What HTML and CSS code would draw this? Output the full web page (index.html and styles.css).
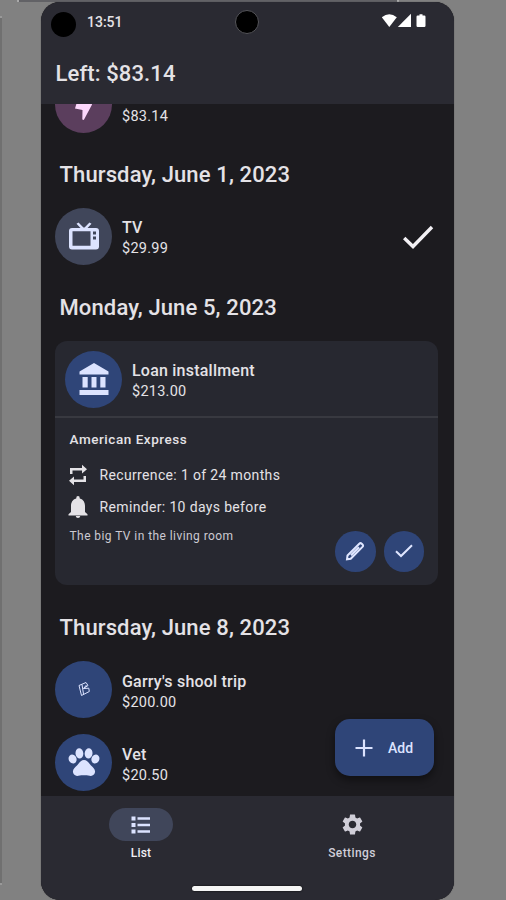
FILE: index.html
```html
<!DOCTYPE html>
<html lang="en">
<head>
<meta charset="utf-8">
<title>Payments</title>
<link rel="stylesheet" href="styles.css">
</head>
<body>
<div class="edge edge-left"></div>
<div class="edge edge-top"></div>
<main class="phone">
  <header class="top">
    <div class="status">
      <span class="dot"></span>
      <span class="clock">13:51</span>
      <span class="camera"></span>
      <svg class="signals" viewBox="0 0 48 16" width="48" height="16">
        <path d="M.8 4.2Q8.300-1.500 15.800 4.200L8.300 14Z"/>
        <path d="M30 .800V14H16.800Z"/>
        <path d="M38.500 1.300h3v1.200h1.800q1.200 0 1.200 1.200v9q0 1.300-1.200 1.300h-6.600q-1.200 0-1.200-1.300v-9q0-1.200 1.200-1.200h1.800Z"/>
      </svg>
    </div>
    <h1 class="balance">Left: $83.14</h1>
  </header>

  <section class="list">
    <div class="row row-first">
      <span class="avatar plum"><svg viewBox="0 0 34 34" width="34" height="34"><path d="M9.500 16.500 27 8 24.800 18 16.800 33 15.300 32.500 15.500 23 8 21.500Z"/></svg></span>
      <div class="info info-first"><span class="sum">$83.14</span></div>
    </div>
    <h2 class="date date-first">Thursday, June 1, 2023</h2>
    <div class="row">
      <span class="avatar slate"><svg viewBox="0 0 32 30" width="32" height="30"><path d="m8.500 1.800 2-1.300 5 5h1L21.500.500l2 1.300-4 4.200H28q3 0 3 3V24.500q0 3-3 3H4q-3 0-3-3V9q0-3 3-3h8.500ZM4.500 9.300v14.500h18V9.300ZM25 9.500v3h3v-3Zm0 5v3h3v-3Z" fill-rule="evenodd"/></svg></span>
      <div class="info"><b class="name">TV</b><span class="sum">$29.99</span></div>
      <svg class="done" viewBox="0 0 32 24" width="32" height="24"><path d="m2.200 13 8.800 8.500L30 2"/></svg>
    </div>
    <h2 class="date">Monday, June 5, 2023</h2>
    <article class="card">
      <div class="row card-head">
        <span class="avatar blue"><svg viewBox="0 0 30 32" width="30" height="32"><path d="M15 0 29.500 8.500v3H.500v-3ZM3.500 14H8.700v10.500H3.500Zm9 0h5v10.500h-5Zm8.800 0h5.200v10.500h-5.200ZM.500 27h29v5H.500Z"/></svg></span>
        <div class="info"><b class="name">Loan installment</b><span class="sum">$213.00</span></div>
      </div>
      <div class="details">
        <p class="account">American Express</p>
        <p class="fact"><svg viewBox="0 0 20 22" width="20" height="22"><path d="M2 10V4h12V.800l5 4.400-5 4.400V6.500H4.500V10ZM18 12v6H6v3.200l-5-4.400 5-4.400v3.100h9.500V12Z"/></svg><span>Recurrence: 1 of 24 months</span></p>
        <p class="fact"><svg viewBox="0 0 20 22" width="20" height="22"><path d="M10 0q1.800 0 1.800 2.400C15.500 3.300 17 6.500 17 10v6l2.500 2.300v1.200H.500v-1.200L3 16v-6c0-3.500 1.500-6.700 5.200-7.600Q8.200 0 10 0ZM7.700 20h4.600Q12 22 10 22T7.700 20Z"/></svg><span>Reminder: 10 days before</span></p>
        <p class="note">The big TV in the living room</p>
        <div class="actions">
          <span class="action"><svg viewBox="0 0 22 22" width="22" height="22" class="line"><path d="m3 19.300.500-3.800L15.300 3.700q1.200-1.200 2.400 0l.800.800q1.200 1.200 0 2.400L6.700 18.700ZM7 15.200 15 7.200"/></svg></span>
          <span class="action"><svg viewBox="0 0 20 16" width="20" height="16" class="line"><path d="m2 8.300 5 4.700L18 2.200"/></svg></span>
        </div>
      </div>
    </article>
    <h2 class="date">Thursday, June 8, 2023</h2>
    <div class="row row-low">
      <span class="avatar blue"><svg class="scribble" viewBox="0 0 16 18" width="16" height="18"><path d="M3 5.500 10 2.500 12 5.500 7.500 8.500 12.800 8.200 13.300 11.500 5.500 15.500ZM6 4.500 7.500 14M7.500 8.500 10.500 5"/></svg></span>
      <div class="info"><b class="name">Garry's shool trip</b><span class="sum">$200.00</span></div>
    </div>
    <div class="row row-low row-next">
      <span class="avatar blue"><svg viewBox="0 0 32 28" width="32" height="28"><ellipse cx="4.600" cy="11" rx="3.900" ry="4.700" transform="rotate(-22 4.600 11)"/><ellipse cx="11.400" cy="5.400" rx="3.900" ry="5.200" transform="rotate(-6 11.400 5.400)"/><ellipse cx="20.600" cy="5.400" rx="3.900" ry="5.200" transform="rotate(6 20.600 5.400)"/><ellipse cx="27.400" cy="11" rx="3.900" ry="4.700" transform="rotate(22 27.400 11)"/><path d="M16 12c3 0 5 3.200 7 5.400 2 2 4.500 3.800 4 6.800-.5 3-3.500 4-5.500 3.600-3.500-.6-7.500-.6-11 0-2 .4-5-.6-5.500-3.600-.5-3 2-4.800 4-6.800 2-2.200 4-5.400 7-5.400Z"/></svg></span>
      <div class="info"><b class="name">Vet</b><span class="sum">$20.50</span></div>
    </div>
    <button class="add"><svg viewBox="0 0 18 18" width="18" height="18"><path d="M7.900.500h2.200v7.400h7.400v2.200h-7.400v7.400H7.900v-7.400H.500V7.900h7.400Z"/></svg><span>Add</span></button>
  </section>

  <nav class="tabs">
    <a class="tab active"><span class="pill"><svg viewBox="0 0 20 18" width="20" height="18"><path d="M.500.500h4v4h-4Zm0 6.500h4v4h-4Zm0 6.500h4v4h-4ZM6.500 1.200H19v2.600H6.500Zm0 6.500H19v2.600H6.500Zm0 6.500H19v2.600H6.500Z"/></svg></span><span>List</span></a>
    <a class="tab"><span class="pill"><svg viewBox="2 2 20 20" width="21" height="21"><path d="M19.140 12.940c.04-.3.060-.61.060-.94 0-.32-.02-.64-.07-.94l2.030-1.580a.49.490 0 0 0 .12-.61l-1.920-3.320a.488.488 0 0 0-.59-.22l-2.390.960c-.5-.38-1.030-.7-1.620-.94l-.36-2.540a.484.484 0 0 0-.48-.41h-3.840c-.24 0-.43.170-.47.410l-.36 2.540c-.59.240-1.130.570-1.620.940l-2.390-.96c-.22-.08-.47 0-.59.220L2.740 8.870c-.12.210-.08.470.12.610l2.030 1.580c-.05.300-.09.630-.09.940s.02.640.070.940l-2.030 1.580a.49.490 0 0 0-.12.610l1.920 3.320c.12.220.370.290.590.220l2.390-.96c.5.380 1.030.700 1.620.940l.36 2.540c.05.240.240.410.480.410h3.840c.24 0 .44-.17.470-.41l.36-2.540c.59-.24 1.130-.56 1.620-.94l2.390.960c.22.080.470 0 .59-.22l1.920-3.320c.12-.22.070-.47-.12-.61l-2.010-1.580zM12 15.600c-1.980 0-3.600-1.620-3.600-3.600s1.620-3.600 3.600-3.600 3.600 1.620 3.600 3.600-1.620 3.600-3.600 3.600z"/></svg></span><span>Settings</span></a>
    <span class="home"></span>
  </nav>
</main>
</body>
</html>
```
FILE: styles.css
```css
* { box-sizing: border-box; margin: 0; padding: 0; }
body {
  width: 506px;
  height: 900px;
  overflow: hidden;
  position: relative;
  padding: 2px 0 0 41px;
  background: #818181;
  font-family: Roboto, "Liberation Sans", sans-serif;
  color: #e4e2e6;
}
svg { display: block; flex: none; fill: currentColor; }
.edge { position: absolute; }
.edge-left { left: 0; top: 16px; width: 2px; height: 869px; background: #707070; border-top: 2px solid #999; border-bottom: 2px solid #999; }
.edge-top { left: 17px; top: 0; width: 382px; height: 2px; background: #626266; border-left: 2px solid #aaa; border-right: 2px solid #aaa; }

.phone {
  position: relative;
  display: flex;
  flex-direction: column;
  width: 413px;
  height: 898px;
  overflow: hidden;
  border-radius: 19px;
  background: #1c1b1f;
  box-shadow: 0 0 1px #333;
}
.top { height: 102px; background: #2a2a32; flex: none; }
.status { display: flex; align-items: center; height: 40px; position: relative; }
.dot { width: 25px; height: 25px; margin: 5px 11px 0 10px; border-radius: 50%; background: #000; }
.clock { font-size: 14px; font-weight: 500; }
.camera { position: absolute; left: 194px; top: 8px; width: 24px; height: 24px; border-radius: 50%; background: #000; border: 1px solid #55555a; }
.signals { margin: -2px 25px 0 auto; color: #fff; }
.balance { margin: 18px 0 0 14.500px; font-size: 22px; line-height: 28px; font-weight: 500; letter-spacing: .12px; }

.list { position: relative; flex: 1; min-height: 0; overflow: hidden; padding: 0 16px 0 14px; }
.row { display: flex; align-items: center; height: 57px; }
.row-first { margin-top: -28.500px; }
.row-next { margin-top: 16px; }
.avatar { display: flex; align-items: center; justify-content: center; width: 57px; height: 57px; border-radius: 50%; flex: none; color: #dce3ff; }
.plum { background: #5b3e5d; color: #fbd7fb; }
.slate { background: #40465a; }
.blue { background: #2f4578; }
.info { display: flex; flex-direction: column; margin-left: 10px; padding-top: 4px; }
.info-first { padding-top: 24px; }
.row-low .info { padding-top: 6px; }
.name { font-size: 16px; line-height: 20px; font-weight: 500; letter-spacing: .22px; }
.sum { font-size: 14.500px; line-height: 21px; letter-spacing: .25px; }
.done { margin: 0 4px 0 auto; fill: none; stroke: #f2f0f4; stroke-width: 3.400; }
.date { height: 75.500px; padding: 28px 0 0 4.500px; font-size: 22px; line-height: 29px; font-weight: 500; white-space: nowrap; letter-spacing: .13px; }
.date-first { padding-top: 27px; }
.card + .date { padding-top: 28px; }

.card { height: 244.500px; border-radius: 12px; background: #272830; }
.card-head { height: 77.500px; padding: 2px 0 0 10px; border-bottom: 2px solid #383940; }
.details { position: relative; padding: 11px 14.500px; }
.account { font-size: 13.500px; line-height: 20px; font-weight: 500; letter-spacing: .55px; }
.fact { display: flex; align-items: center; height: 22px; margin: 10px 0 0 -2px; font-size: 14px; letter-spacing: .35px; }
.account + .fact { margin-top: 15px; }
.fact span { margin-left: 12px; }
.note { margin-top: 8px; font-size: 12px; line-height: 20px; color: #cccad2; letter-spacing: .43px; }
.actions { position: absolute; right: 14px; top: 113px; display: flex; gap: 8px; }
.action { display: flex; align-items: center; justify-content: center; width: 40.500px; height: 40.500px; border-radius: 50%; background: #2f4578; color: #e0e6ff; }
.line { fill: none; stroke: currentColor; stroke-width: 2; }
.scribble { fill: none; stroke: currentColor; stroke-width: 1; }
.add {
  position: absolute; right: 20px; bottom: 20.500px; display: flex; align-items: center; gap: 15px;
  width: 99px; height: 57px; padding: 1px 0 0 20px; border: 0; border-radius: 15px;
  background: #2f4578; color: #dce3ff; font: 500 14px Roboto, sans-serif;
  box-shadow: 0 4px 8px rgba(0, 0, 0, .45);
}

.tabs { position: relative; display: flex; flex: none; height: 104px; background: #2a2a32; padding-top: 12px; }
.tab { display: flex; flex-direction: column; align-items: center; width: 200px; gap: 1px; font-size: 12px; line-height: 22px; font-weight: 500; letter-spacing: .4px; color: #d0ced8; }
.tab + .tab { margin-left: 11px; }
.pill { display: flex; align-items: center; justify-content: center; width: 64px; height: 33px; border-radius: 17px; }
.active { color: #f0eff5; letter-spacing: .2px; }
.active .pill { background: #40465a; color: #dce3ff; }
.home { position: absolute; left: 151px; bottom: 9px; width: 110px; height: 5px; border-radius: 3px; background: #f5f5f5; box-shadow: 0 0 2px #000; }
```
